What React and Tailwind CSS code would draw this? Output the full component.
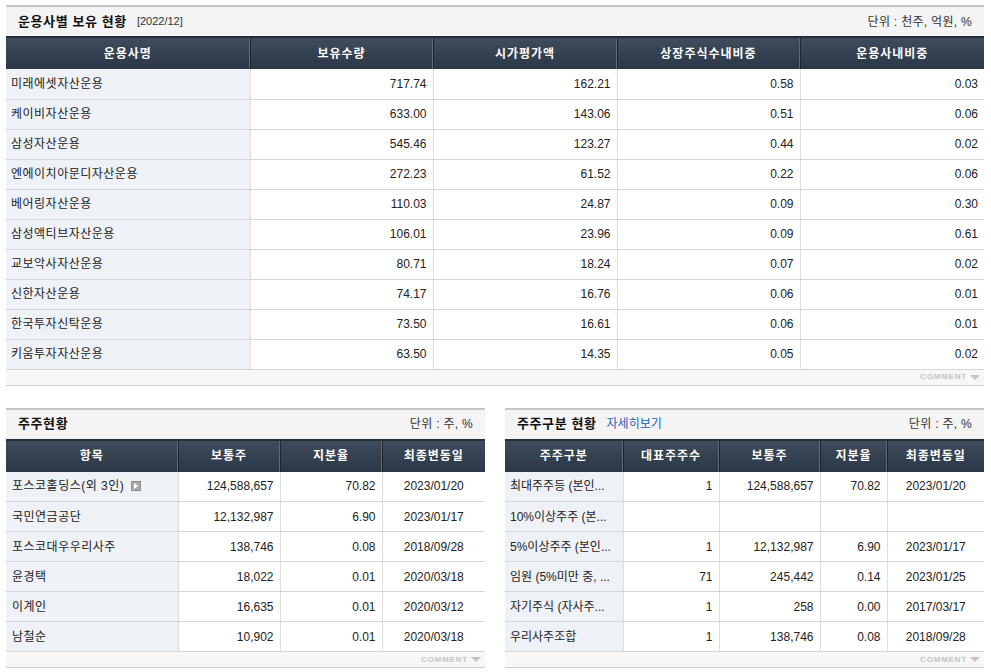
import React from "react";

const font = { fontFamily: '"Liberation Sans", "Noto Sans CJK KR", sans-serif' };

const funds = [
  ["미래에셋자산운용", "717.74", "162.21", "0.58", "0.03"],
  ["케이비자산운용", "633.00", "143.06", "0.51", "0.06"],
  ["삼성자산운용", "545.46", "123.27", "0.44", "0.02"],
  ["엔에이치아문디자산운용", "272.23", "61.52", "0.22", "0.06"],
  ["베어링자산운용", "110.03", "24.87", "0.09", "0.30"],
  ["삼성액티브자산운용", "106.01", "23.96", "0.09", "0.61"],
  ["교보악사자산운용", "80.71", "18.24", "0.07", "0.02"],
  ["신한자산운용", "74.17", "16.76", "0.06", "0.01"],
  ["한국투자신탁운용", "73.50", "16.61", "0.06", "0.01"],
  ["키움투자자산운용", "63.50", "14.35", "0.05", "0.02"],
];

const holders = [
  ["포스코홀딩스(외 3인)", "124,588,657", "70.82", "2023/01/20", true],
  ["국민연금공단", "12,132,987", "6.90", "2023/01/17"],
  ["포스코대우우리사주", "138,746", "0.08", "2018/09/28"],
  ["윤경택", "18,022", "0.01", "2020/03/18"],
  ["이계인", "16,635", "0.01", "2020/03/12"],
  ["남철순", "10,902", "0.01", "2020/03/18"],
];

const groups = [
  ["최대주주등 (본인...", "1", "124,588,657", "70.82", "2023/01/20"],
  ["10%이상주주 (본...", "", "", "", ""],
  ["5%이상주주 (본인...", "1", "12,132,987", "6.90", "2023/01/17"],
  ["임원 (5%미만 중, ...", "71", "245,442", "0.14", "2023/01/25"],
  ["자기주식 (자사주...", "1", "258", "0.00", "2017/03/17"],
  ["우리사주조합", "1", "138,746", "0.08", "2018/09/28"],
];

function Th({ children, last }) {
  return (
    <th
      className={`h-[32px] p-0 text-[12px] font-bold tracking-[1px] text-white text-center bg-gradient-to-b from-[#3e4c5c] to-[#2b3747] border-t-2 border-t-[#252d37] ${
        last ? "" : "border-r border-r-[#1e252e] shadow-[inset_-1px_0_0_#5c6977]"
      }`}
    >
      {children}
    </th>
  );
}

function Comment() {
  return (
    <div className="h-[16px] bg-[#f7f7f7] border-b border-[#cfcfcf] flex items-center justify-end pr-[4px] gap-[3px]">
      <span className="text-[8px] tracking-[0.8px] text-[#c4c4c4] font-bold leading-none">COMMENT</span>
      <span className="w-0 h-0 border-l-[5px] border-r-[5px] border-t-[5px] border-l-transparent border-r-transparent border-t-[#c4c4c4]" />
    </div>
  );
}

function TitleBar({ title, extra, unit }) {
  return (
    <div className="h-[31px] bg-[#f4f4f4] border-t-2 border-[#c6c6c6] flex items-center justify-between pl-[12px] pr-[12px]">
      <div className="flex items-center gap-[10px]">
        <span className="text-[13px] font-bold tracking-[0.6px] text-[#111]">{title}</span>
        {extra}
      </div>
      <span className="text-[12px] tracking-[0.3px] text-[#333]">{unit}</span>
    </div>
  );
}

const td = "h-[30px] p-0 border-b border-[#d5d5d5] text-[12px] text-[#222]";
const label = `${td} bg-[#eef1f6] border-r border-r-[#dedede] tracking-[0.5px]`;
const num = `${td} text-right pr-[6px] border-r border-r-[#dedede]`;

export default function App() {
  return (
    <div className="w-[991px] h-[672px] bg-white pt-[5px] px-[6px] overflow-hidden" style={font}>
      <section className="w-[978px]">
        <TitleBar
          title="운용사별 보유 현황"
          extra={<span className="text-[11px] text-[#333]">[2022/12]</span>}
          unit="단위 : 천주, 억원, %"
        />
        <table className="w-full table-fixed border-collapse">
          <colgroup>
            <col className="w-[244px]" />
            <col className="w-[183px]" />
            <col className="w-[184px]" />
            <col className="w-[183px]" />
            <col className="w-[184px]" />
          </colgroup>
          <thead>
            <tr>
              <Th>운용사명</Th>
              <Th>보유수량</Th>
              <Th>시가평가액</Th>
              <Th>상장주식수내비중</Th>
              <Th last>운용사내비중</Th>
            </tr>
          </thead>
          <tbody>
            {funds.map((r) => (
              <tr key={r[0]}>
                <td className={`${label} pl-[5px]`}>{r[0]}</td>
                <td className={num}>{r[1]}</td>
                <td className={num}>{r[2]}</td>
                <td className={num}>{r[3]}</td>
                <td className={`${td} text-right pr-[6px]`}>{r[4]}</td>
              </tr>
            ))}
          </tbody>
        </table>
        <Comment />
      </section>

      <div className="flex gap-[20px] mt-[22px]">
        <section className="w-[479px]">
          <TitleBar title="주주현황" unit="단위 : 주, %" />
          <table className="w-full table-fixed border-collapse">
            <colgroup>
              <col className="w-[172px]" />
              <col className="w-[102px]" />
              <col className="w-[102px]" />
              <col className="w-[103px]" />
            </colgroup>
            <thead>
              <tr>
                <Th>항목</Th>
                <Th>보통주</Th>
                <Th>지분율</Th>
                <Th last>최종변동일</Th>
              </tr>
            </thead>
            <tbody>
              {holders.map((r) => (
                <tr key={r[0]}>
                  <td className={`${label} pl-[6px]`}>
                    <span className="inline-flex items-center gap-[7px]">
                      {r[0]}
                      {r[4] && (
                        <span className="w-[10px] h-[10px] bg-[#a9a9a9] border border-[#8f8f8f] inline-flex items-center justify-center">
                          <span className="w-0 h-0 border-t-[3px] border-b-[3px] border-l-[4px] border-t-transparent border-b-transparent border-l-white" />
                        </span>
                      )}
                    </span>
                  </td>
                  <td className={num}>{r[1]}</td>
                  <td className={num}>{r[2]}</td>
                  <td className={`${td} text-center`}>{r[3]}</td>
                </tr>
              ))}
            </tbody>
          </table>
          <Comment />
        </section>

        <section className="w-[479px]">
          <TitleBar
            title="주주구분 현황"
            extra={<span className="text-[12px] text-[#1a5fb4]">자세히보기</span>}
            unit="단위 : 주, %"
          />
          <table className="w-full table-fixed border-collapse">
            <colgroup>
              <col className="w-[118px]" />
              <col className="w-[96px]" />
              <col className="w-[101px]" />
              <col className="w-[67px]" />
              <col className="w-[97px]" />
            </colgroup>
            <thead>
              <tr>
                <Th>주주구분</Th>
                <Th>대표주주수</Th>
                <Th>보통주</Th>
                <Th>지분율</Th>
                <Th last>최종변동일</Th>
              </tr>
            </thead>
            <tbody>
              {groups.map((r) => (
                <tr key={r[0]}>
                  <td className={`${label} pl-[5px] tracking-[0px] whitespace-nowrap overflow-hidden`}>{r[0]}</td>
                  <td className={num}>{r[1]}</td>
                  <td className={num}>{r[2]}</td>
                  <td className={num}>{r[3]}</td>
                  <td className={`${td} text-center`}>{r[4]}</td>
                </tr>
              ))}
            </tbody>
          </table>
          <Comment />
        </section>
      </div>
    </div>
  );
}
